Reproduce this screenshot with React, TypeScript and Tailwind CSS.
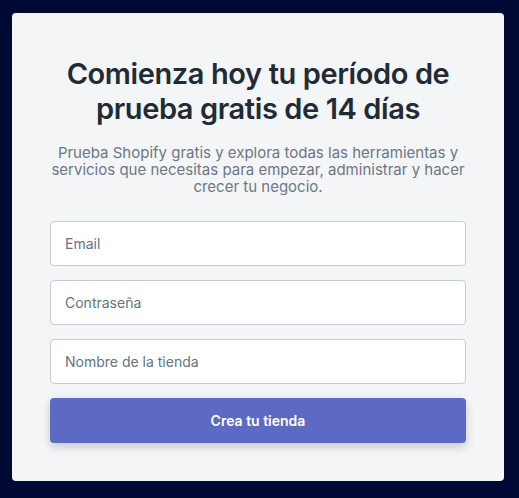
export default function App() {
  const fields = ["Email", "Contraseña", "Nombre de la tienda"];

  return (
    <div className="min-h-[498px] w-[519px] bg-[#000934] pl-[12px] pt-[13px] font-['Inter',sans-serif]">
      <div className="flex h-[468px] w-[492px] flex-col rounded-[4px] bg-[#f4f5f7] px-[38px] pt-[43px]">
        <h1 className="text-center text-[29px] font-semibold leading-[35px] tracking-[-0.4px] text-[#212b36]">
          Comienza hoy tu período de
          <br />
          prueba gratis de 14 días
        </h1>
        <p className="mt-[18px] text-center text-[15px] leading-[17px] text-[#6b7785]">
          Prueba Shopify gratis y explora todas las herramientas y servicios que necesitas para empezar, administrar y hacer
          crecer tu negocio.
        </p>
        <form className="mt-[26px] flex flex-col gap-[14px]">
          {fields.map((label) => (
            <input
              key={label}
              type="text"
              placeholder={label}
              className="h-[45px] w-full rounded-[4px] border border-[#c4cdd5] bg-white px-[14px] text-[14px] text-[#212b36] placeholder:text-[#637381] focus:outline-none"
            />
          ))}
          <button
            type="button"
            className="h-[45px] w-full rounded-[4px] bg-[#5c6ac4] text-[14px] font-semibold text-white shadow-[0_4px_10px_rgba(0,0,0,0.18)]"
          >
            Crea tu tienda
          </button>
        </form>
      </div>
    </div>
  );
}
